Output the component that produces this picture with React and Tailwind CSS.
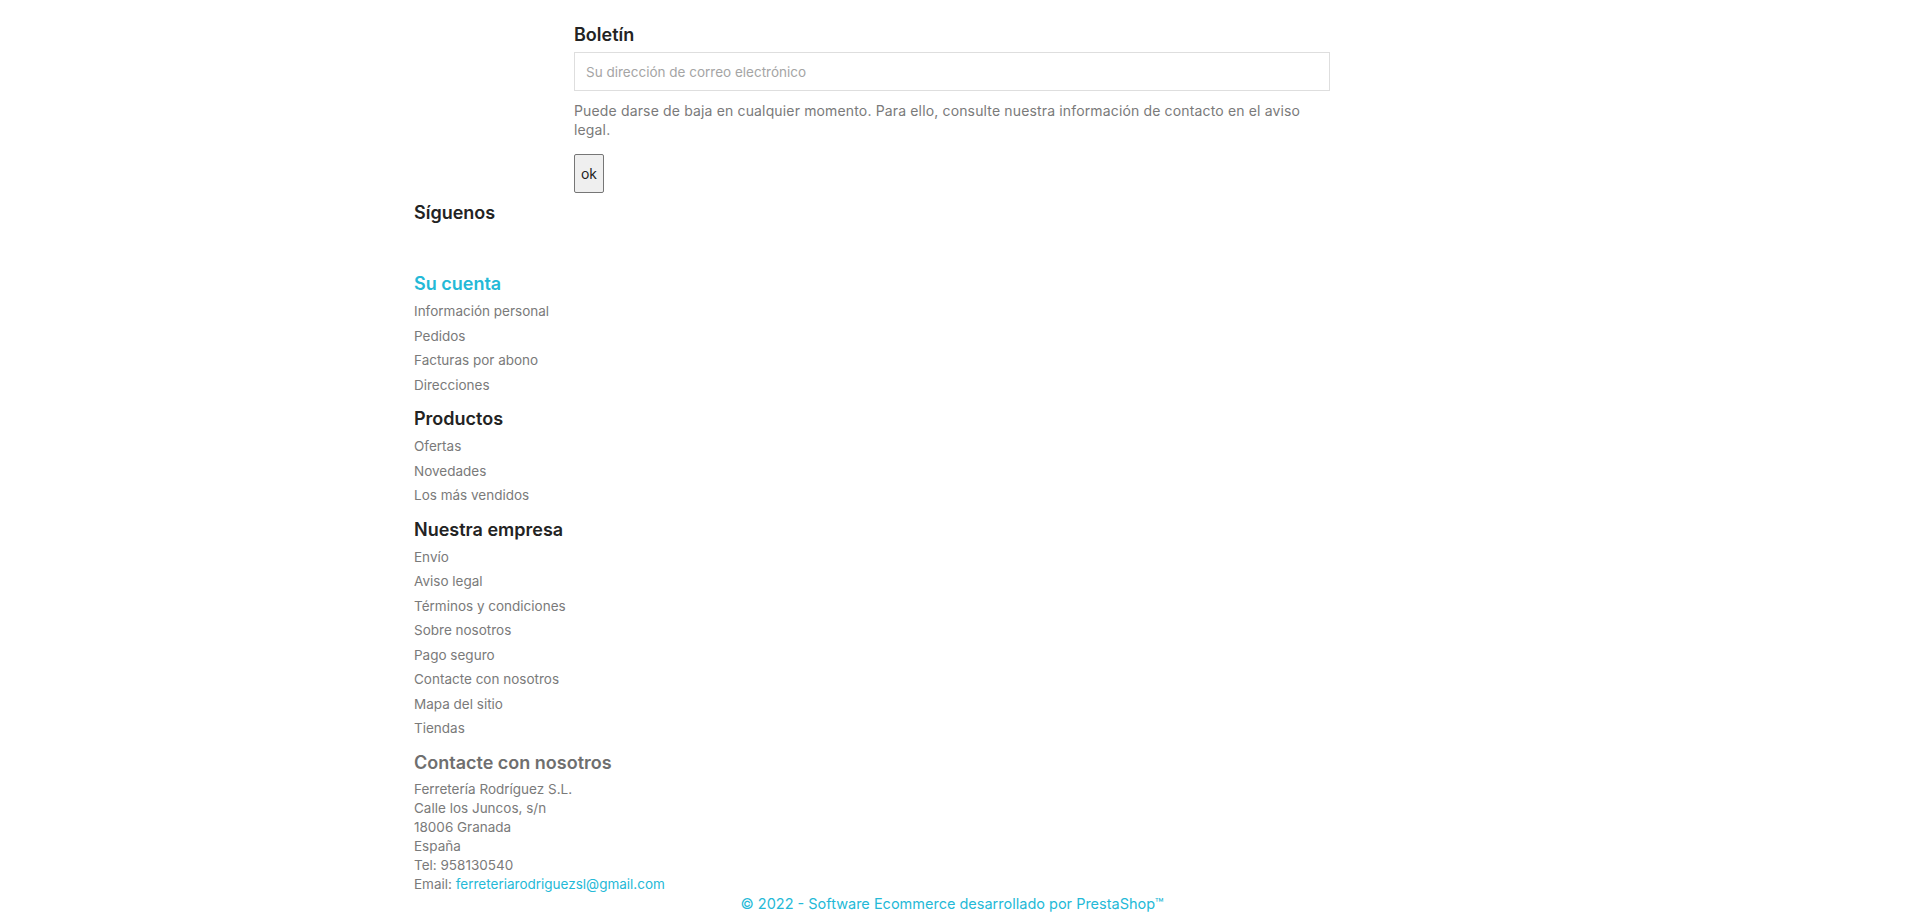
import React from 'react';

const cuenta = ['Información personal', 'Pedidos', 'Facturas por abono', 'Direcciones'];
const productos = ['Ofertas', 'Novedades', 'Los más vendidos'];
const empresa = [
    'Envío',
    'Aviso legal',
    'Términos y condiciones',
    'Sobre nosotros',
    'Pago seguro',
    'Contacte con nosotros',
    'Mapa del sitio',
    'Tiendas',
];

const LinkBlock = ({ title, links, titleClass, first }) => (
    <div className={first ? 'mt-[47px]' : 'mt-[10px]'}>
        <h4 className={`text-[18px] leading-[24px] font-semibold ${titleClass}`}>{title}</h4>
        <ul className="mt-[3px]">
            {links.map(link => (
                <li key={link} className="text-[13.5px] leading-[24.5px] text-[#7a7a7a]">
                    <a href="#">{link}</a>
                </li>
            ))}
        </ul>
    </div>
);

export default function App() {
    return (
        <div className="bg-white min-h-screen" style={{ fontFamily: 'Inter, "Noto Sans", sans-serif' }}>
            <footer className="w-[1092px] mx-auto pt-[23px]">
                {/* Newsletter */}
                <div className="ml-[160px] w-[756px]">
                    <h4 className="text-[18px] leading-[24px] font-semibold text-[#232323]">Boletín</h4>
                    <input
                        type="email"
                        placeholder="Su dirección de correo electrónico"
                        className="mt-[5px] block w-full h-[39px] border border-[#dedede] px-[11px] text-[13.5px] placeholder:text-[#a5a5a5] outline-none"
                    />
                    <p className="mt-[10px] text-[14px] leading-[19px] tracking-[0.15px] text-[#7a7a7a]">
                        Puede darse de baja en cualquier momento. Para ello, consulte nuestra información de contacto en el aviso legal.
                    </p>
                    <button className="mt-[15px] block w-[30px] h-[39px] bg-[#efefef] border border-[#767676] rounded-[2px] text-[14px] text-[#232323]">
                        ok
                    </button>
                </div>

                <h4 className="mt-[8px] text-[18px] leading-[24px] font-semibold text-[#232323]">Síguenos</h4>

                <LinkBlock first title="Su cuenta" links={cuenta} titleClass="text-[#24b9d7]" />
                <LinkBlock title="Productos" links={productos} titleClass="text-[#232323]" />
                <LinkBlock title="Nuestra empresa" links={empresa} titleClass="text-[#232323]" />

                <div className="mt-[10.5px]">
                    <h4 className="text-[18px] leading-[24px] font-semibold text-[#6f6f6f]">Contacte con nosotros</h4>
                    <div className="mt-[5px] text-[13.5px] leading-[19px] text-[#7a7a7a]">
                        Ferretería Rodríguez S.L.<br />
                        Calle los Juncos, s/n<br />
                        18006 Granada<br />
                        España<br />
                        Tel: 958130540<br />
                        Email: <a href="#" className="text-[#24b9d7]">ferreteriarodriguezsl@gmail.com</a>
                    </div>
                </div>

                <p className="pr-[16px] text-center text-[14.5px] leading-[19px] text-[#24b9d7]">
                    <a href="#">© 2022 - Software Ecommerce desarrollado por PrestaShop™</a>
                </p>
            </footer>
        </div>
    );
}
